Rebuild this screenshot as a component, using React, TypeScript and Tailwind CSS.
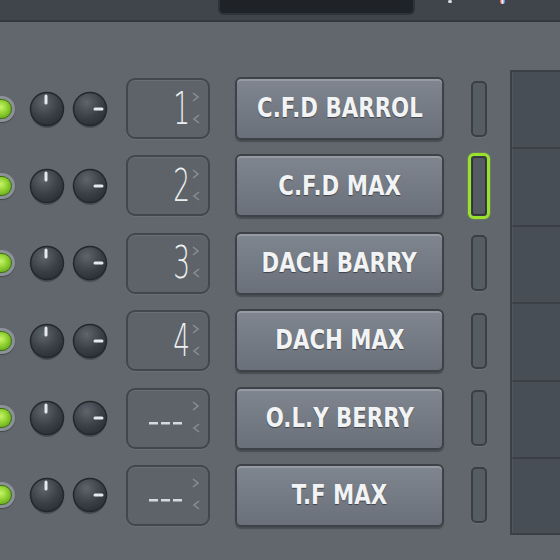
import React from "react";

const channels = [
  { num: "1", name: "C.F.D BARROL", selected: false },
  { num: "2", name: "C.F.D MAX", selected: true },
  { num: "3", name: "DACH BARRY", selected: false },
  { num: "4", name: "DACH MAX", selected: false },
  { num: "", name: "O.L.Y BERRY", selected: false },
  { num: "", name: "T.F MAX", selected: false },
];

function Led() {
  return (
    <div className="-ml-[13px] w-[28px] h-[26px] rounded-full bg-[#8b9197] p-[3px] shadow-[0_1px_1px_rgba(0,0,0,0.3)]">
      <div className="w-full h-full rounded-full bg-[radial-gradient(circle_at_50%_40%,#c6f36a_0%,#8fd030_45%,#4f9414_100%)] border border-[#3f6e12]" />
    </div>
  );
}

function Knob({ kind }: { kind: "vol" | "pan" }) {
  return (
    <svg width="36" height="38" viewBox="0 0 36 38">
      <defs>
        <radialGradient id={`k-${kind}`} cx="40%" cy="30%" r="75%">
          <stop offset="0%" stopColor="#5d646b" />
          <stop offset="60%" stopColor="#3b4046" />
          <stop offset="100%" stopColor="#2b2f34" />
        </radialGradient>
      </defs>
      <ellipse cx="18" cy="21" rx="16" ry="16" fill="rgba(0,0,0,0.25)" />
      <circle cx="18" cy="18" r="16.5" fill={`url(#k-${kind})`} stroke="#24282c" strokeWidth="1.5" />
      {kind === "vol" ? (
        <line x1="17" y1="5" x2="17" y2="12" stroke="#e6e9ec" strokeWidth="3" strokeLinecap="round" />
      ) : (
        <line x1="23" y1="18" x2="30" y2="18" stroke="#e6e9ec" strokeWidth="3" strokeLinecap="round" />
      )}
    </svg>
  );
}

function NumBox({ num }: { num: string }) {
  return (
    <div className="ml-[18px] w-[84px] h-[61px] rounded-[9px] border-2 border-[#41474d] bg-[#5d6369] shadow-[inset_0_1px_0_rgba(255,255,255,0.08),0_1px_0_rgba(255,255,255,0.06)] flex items-center justify-end pr-[7px]">
      {num ? (
        <span
          className="inline-block origin-right scale-x-[0.6] text-[44px] leading-none text-[#eceff2] mr-[-4px]"
          style={{ fontFamily: '"DejaVu Sans", sans-serif', fontWeight: 200 }}
        >
          {num}
        </span>
      ) : (
        <svg width="36" height="6" viewBox="0 0 36 6" className="mt-[10px] mr-[1px]">
          <rect x="0" y="2" width="9" height="2.5" fill="#d6dade" />
          <rect x="12" y="2" width="9" height="2.5" fill="#d6dade" />
          <rect x="24" y="2" width="9" height="2.5" fill="#d6dade" />
        </svg>
      )}
      <svg width="10" height="34" viewBox="0 0 10 34" className="ml-[5px]">
        <polyline points="2,1 7,5 2,9" fill="none" stroke="#878d94" strokeWidth="1.6" />
        <polyline points="8,23 3,27 8,31" fill="none" stroke="#878d94" strokeWidth="1.6" />
      </svg>
    </div>
  );
}

function NameButton({ name }: { name: string }) {
  return (
    <div className="ml-[25px] w-[209px] h-[63px] rounded-[6px] border-2 border-[#3d4248] bg-[linear-gradient(#80868f,#6a7079)] shadow-[inset_0_2px_0_rgba(255,255,255,0.18),0_2px_1px_rgba(0,0,0,0.25)] flex items-center justify-center">
      <span
        className="inline-block scale-x-[0.79] whitespace-nowrap text-[27px] font-bold text-[#f1f3f5] [text-shadow:0_1px_1px_rgba(0,0,0,0.45)]"
        style={{ fontFamily: '"DejaVu Sans", sans-serif' }}
      >
        {name}
      </span>
    </div>
  );
}

function Selector({ selected }: { selected: boolean }) {
  if (selected) {
    return (
      <div className="ml-[24px] w-[22px] h-[66px] rounded-[6px] border-[3px] border-[#9be22e] p-[1px] bg-[#3a3f45] shadow-[0_0_2px_rgba(155,226,46,0.6)]">
        <div className="w-full h-full rounded-[3px] bg-[#555b62] border border-[#2f3439]" />
      </div>
    );
  }
  return (
    <div className="ml-[27px] mr-[3px] w-[16px] h-[56px] rounded-[5px] border-2 border-[#3a3f45] bg-[#565c63] shadow-[0_1px_0_rgba(255,255,255,0.07)]" />
  );
}

export default function App() {
  return (
    <div className="w-[560px] h-[560px] overflow-hidden bg-[#61676d] flex flex-col" style={{ fontFamily: '"DejaVu Sans", sans-serif' }}>
      <div className="h-[22px] shrink-0 bg-[#3f454a] border-b-2 border-[#33383d] flex items-start">
        <div className="ml-[218px] w-[197px] h-[15px] bg-[#1f2327] border-2 border-t-0 border-[#2e3338] rounded-b-[6px]" />
        <div className="ml-[33px] w-[4px] h-[3px] rounded-full bg-[#d9dde0]" />
        <div className="ml-[48px] w-[5px] h-[4px] rounded-b-full bg-[linear-gradient(90deg,#e05050,#f0f0f0,#5070e0)]" />
      </div>
      <div className="flex flex-1">
        <div className="flex flex-col gap-[14.4px] pt-[55px]">
          {channels.map((c) => (
            <div key={c.name} className="flex items-center h-[63px]">
              <Led />
              <div className="ml-[14px] mt-[2px]"><Knob kind="vol" /></div>
              <div className="ml-[7px] mt-[2px]"><Knob kind="pan" /></div>
              <NumBox num={c.num} />
              <NameButton name={c.name} />
              <Selector selected={c.selected} />
            </div>
          ))}
        </div>
        <div className="ml-[20px] mt-[48px] w-[60px] h-[465px] bg-[#474e55] border-l-2 border-t-2 border-b-2 border-[#3a4046] flex flex-col">
          {channels.map((c, i) => (
            <div
              key={c.name}
              className={i < channels.length - 1 ? "h-[77.4px] shrink-0 border-b-2 border-[#3a4046] border-l border-l-[#4f565d]" : "flex-1 border-l border-l-[#4f565d]"}
            />
          ))}
        </div>
      </div>
    </div>
  );
}
